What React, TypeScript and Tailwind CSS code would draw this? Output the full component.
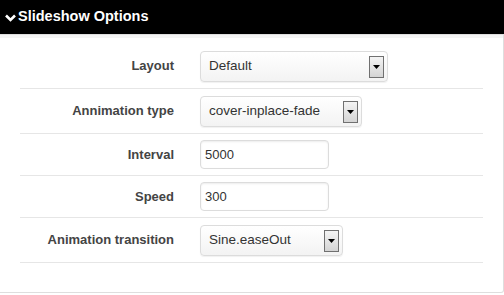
import React from "react"

const font = { fontFamily: '"Liberation Sans", Arial, sans-serif' }

function DropButton() {
  return (
    <span className="flex h-[22px] w-[15px] items-center justify-center border border-[#707070] bg-gradient-to-b from-[#f4f4f4] to-[#d4d4d4]">
      <svg width="7" height="4" viewBox="0 0 7 4">
        <path d="M0 0h7L3.5 4z" fill="#000" />
      </svg>
    </span>
  )
}

function SelectBox({ value, width }: { value: string; width: string }) {
  return (
    <div
      className={`${width} flex h-[31px] items-start justify-between rounded-[4px] border border-[#dcdcdc] bg-gradient-to-b from-white to-[#f3f3f3] pl-[8px] pr-[3px] shadow-[0_1px_1px_rgba(0,0,0,0.06)]`}
    >
      <span className="pt-[4px] text-[13.5px] text-[#333]">{value}</span>
      <span className="pt-[4px]">
        <DropButton />
      </span>
    </div>
  )
}

function InputBox({ value }: { value: string }) {
  return (
    <div className="flex h-[29px] w-[129px] items-center rounded-[4px] border border-[#dcdcdc] bg-white pl-[4px] shadow-[inset_0_1px_2px_rgba(0,0,0,0.08)]">
      <span className="text-[13px] text-[#333]">{value}</span>
    </div>
  )
}

function Row({ label, tall, children }: { label: string; tall?: boolean; children: React.ReactNode }) {
  return (
    <div className={`flex items-center border-b border-[#e6e6e6] ${tall ? "h-[45px]" : "h-[42px]"}`}>
      <div className="w-[155px] pr-[1px] text-right text-[13px] font-bold text-[#444]">{label}</div>
      <div className="ml-[25px]">{children}</div>
    </div>
  )
}

export default function App() {
  return (
    <div className="h-[295px] w-[504px] bg-white" style={font}>
      <div className="flex h-[34px] items-center gap-[2px] bg-black pl-[5px]">
        <svg width="11" height="8" viewBox="0 0 11 8" className="mt-[1px]">
          <path d="M1 1.5l4.5 4.5L10 1.5" stroke="#fff" strokeWidth="2.6" fill="none" />
        </svg>
        <span className="text-[14.5px] font-bold text-white">Slideshow Options</span>
      </div>
      <div className="h-[259px] border-t border-b border-r border-[#dedede] rounded-br-[3px]">
        <div className="h-[3px] bg-[#f4f4f4]" />
        <div className="mx-[20px] pt-[6px]">
          <Row label="Layout" tall>
            <SelectBox value="Default" width="w-[188px]" />
          </Row>
          <Row label="Annimation type" tall>
            <SelectBox value="cover-inplace-fade" width="w-[162px]" />
          </Row>
          <Row label="Interval">
            <InputBox value="5000" />
          </Row>
          <Row label="Speed">
            <InputBox value="300" />
          </Row>
          <Row label="Animation transition" tall>
            <SelectBox value="Sine.easeOut" width="w-[143px]" />
          </Row>
        </div>
      </div>
    </div>
  )
}
